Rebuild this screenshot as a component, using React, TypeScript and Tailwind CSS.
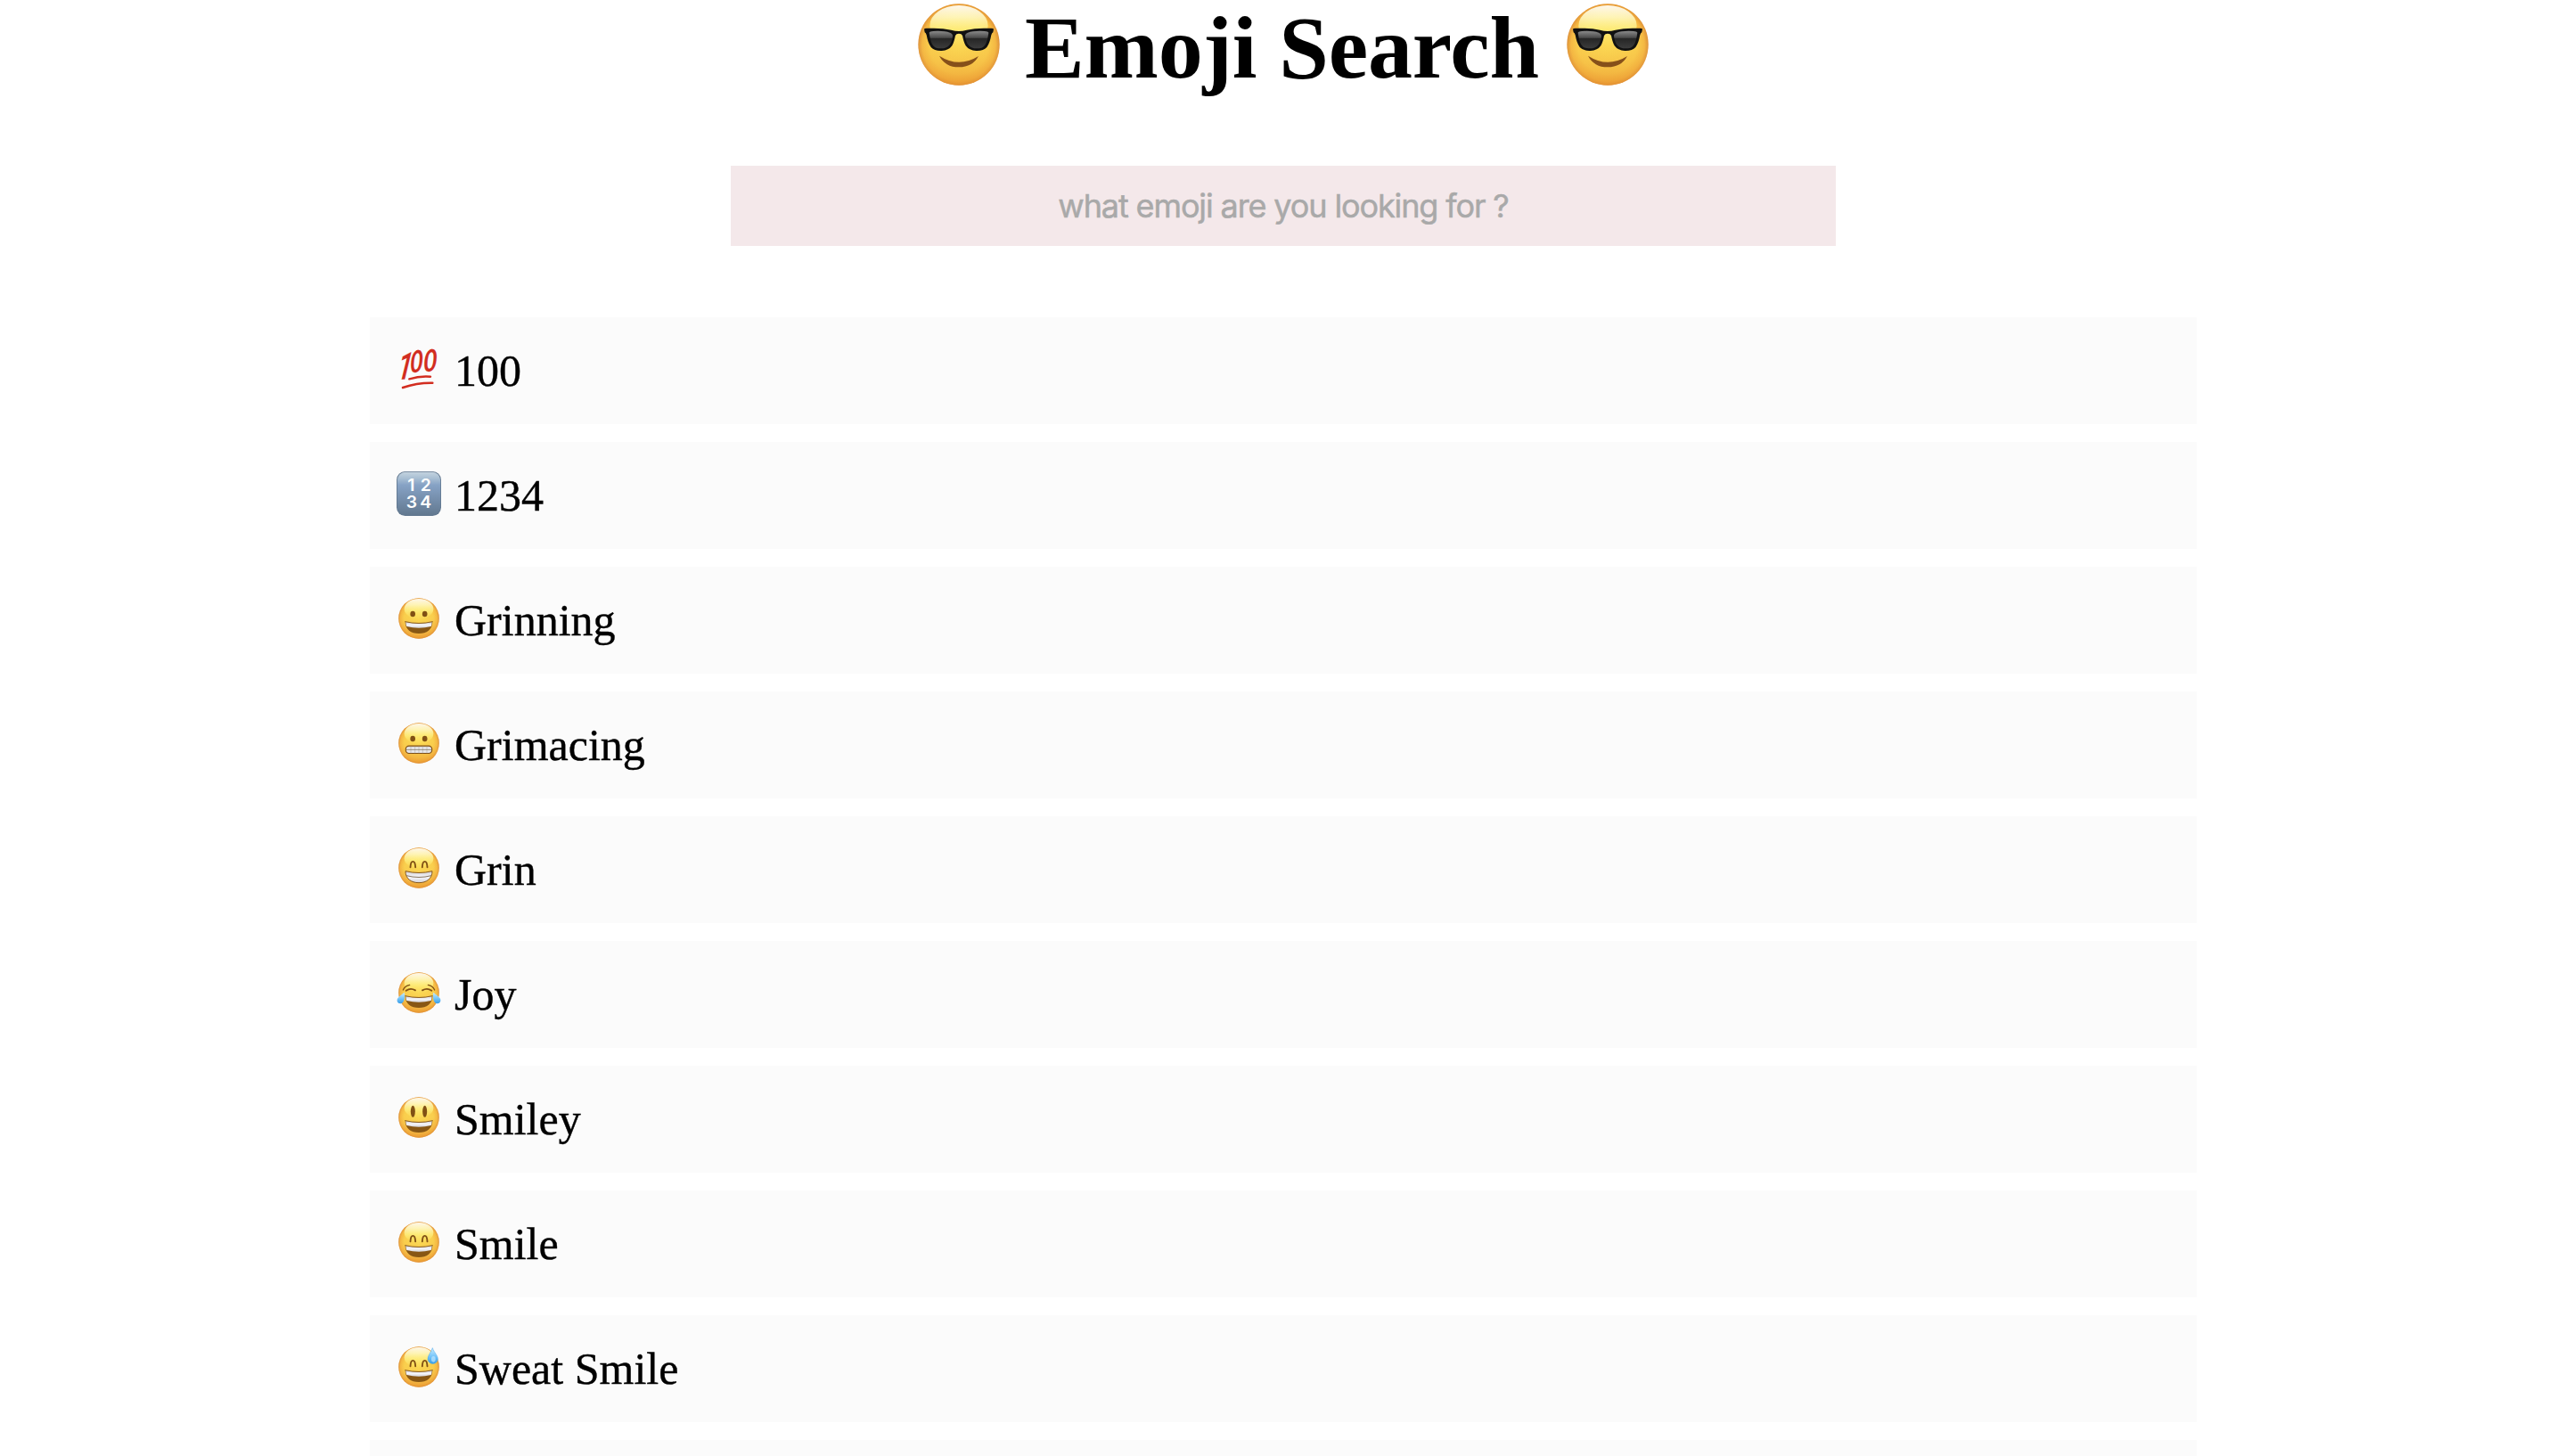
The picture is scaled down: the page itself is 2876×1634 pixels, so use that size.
import React from "react";

type Kind =
  | "sunglasses"
  | "hundred"
  | "numbers"
  | "grinning"
  | "grimacing"
  | "grin"
  | "joy"
  | "smiley"
  | "smile"
  | "sweat";

const BROWN = "#805014";

function Defs() {
  return (
    <svg width="0" height="0" className="absolute" aria-hidden="true">
      <defs>
        <radialGradient id="skin" cx="0.5" cy="0.5" r="0.5">
          <stop offset="0" stopColor="#fbdc55" />
          <stop offset="0.72" stopColor="#f9cf4d" />
          <stop offset="0.9" stopColor="#f3b642" />
          <stop offset="1" stopColor="#d98a38" />
        </radialGradient>
        <linearGradient id="shade" x1="0" y1="0" x2="0" y2="1">
          <stop offset="0" stopColor="#ffb52e" stopOpacity="0.35" />
          <stop offset="0.45" stopColor="#fbc84e" stopOpacity="0.1" />
          <stop offset="1" stopColor="#e9952f" stopOpacity="0.7" />
        </linearGradient>
        <linearGradient id="gloss" x1="0" y1="0" x2="0" y2="1">
          <stop offset="0" stopColor="#ffffff" stopOpacity="0.9" />
          <stop offset="0.3" stopColor="#fffed0" stopOpacity="0.8" />
          <stop offset="0.6" stopColor="#fffb90" stopOpacity="0.6" />
          <stop offset="1" stopColor="#fff07a" stopOpacity="0" />
        </linearGradient>
        <linearGradient id="teeth" x1="0" y1="0" x2="0" y2="1">
          <stop offset="0" stopColor="#cfcfd4" />
          <stop offset="0.5" stopColor="#f6f6fa" />
          <stop offset="1" stopColor="#d4d4da" />
        </linearGradient>
        <linearGradient id="lens" x1="0" y1="0" x2="0" y2="1">
          <stop offset="0" stopColor="#8a8a8a" />
          <stop offset="0.38" stopColor="#4a4a4a" />
          <stop offset="0.44" stopColor="#262626" />
          <stop offset="1" stopColor="#3c3c3c" />
        </linearGradient>
        <linearGradient id="keycap" x1="0" y1="0" x2="0" y2="1">
          <stop offset="0" stopColor="#c3d3df" />
          <stop offset="0.14" stopColor="#a9bfd3" />
          <stop offset="0.3" stopColor="#86a2c5" />
          <stop offset="1" stopColor="#62788f" />
        </linearGradient>
        <linearGradient id="water" x1="0" y1="0" x2="0" y2="1">
          <stop offset="0" stopColor="#c9ecff" />
          <stop offset="0.5" stopColor="#7cc8fa" />
          <stop offset="1" stopColor="#369de8" />
        </linearGradient>
      </defs>
    </svg>
  );
}

function Face() {
  return (
    <>
      <circle cx="75" cy="75" r="68.5" fill="url(#skin)" />
      <circle cx="75" cy="75" r="68.5" fill="url(#shade)" />
      <ellipse cx="75" cy="43" rx="49" ry="34" fill="url(#gloss)" />
    </>
  );
}

function OpenMouth() {
  return (
    <>
      <path d="M29 86Q75 97 121 86C121 112 101 126 75 126S29 112 29 86Z" fill="#885714" />
      <path d="M31 87Q75 98 119 87Q119 96 116 102Q75 112 34 102Q31 96 31 87Z" fill="url(#teeth)" />
      <path d="M29 86Q75 97 121 86" fill="none" stroke={BROWN} strokeWidth="2.5" strokeLinecap="round" />
    </>
  );
}

function ArchEyes() {
  return (
    <g fill="none" stroke={BROWN} strokeWidth="5.6" strokeLinecap="round">
      <path d="M46.500 73C47 59 50 53.500 55 53.500S63 59 63.500 73" />
      <path d="M86.500 73C87 59 90 53.500 95 53.500S103 59 103.500 73" />
    </g>
  );
}

function Artwork({ kind }: { kind: Kind }) {
  switch (kind) {
    case "sunglasses":
      return (
        <>
          <Face />
          <path d="M42 94Q75 115 108 94.500Q98 113 75 113T42 94Z" fill="#86501a" />
          <path
            d="M16.500 49Q17 47.500 22 47.800Q45 46.500 62 50.500Q75 54.500 88 50.500Q105 46.500 128 47.800Q133 47.500 133.500 49L132.500 54.500Q130.500 55.500 129.500 59Q127 73 122 79.500Q116 86 104 85.500Q92 85 86.500 77Q83 71 81 60Q79.500 56.500 75 56.500T69 60Q67 71 63.500 77Q58 85 46 85.500Q34 86 28 79.500Q23 73 20.500 59Q19.500 55.500 17.500 54.500Z"
            fill="#111"
          />
          <path d="M25 55Q26 53 32 52.500Q50 51.500 60 55Q65 57 64.500 61C62.500 75 57 81.500 45 81.500C32 81.500 28 76 25 55Z" fill="url(#lens)" />
          <path d="M125 55Q124 53 118 52.500Q100 51.500 90 55Q85 57 85.500 61C87.500 75 93 81.500 105 81.500C118 81.500 122 76 125 55Z" fill="url(#lens)" />
        </>
      );
    case "hundred":
      return (
        <g fill="#d22d20" stroke="#d22d20">
          <g fontFamily="Lato, sans-serif" fontStyle="italic" fontWeight="700" strokeWidth="0.500">
            <text transform="matrix(0.72 -0.05 -0.12 1 -1 112)" fontSize="126" fontFamily="Roboto, sans-serif" fontWeight="500">1</text>
            <text transform="matrix(0.74 -0.05 -0.04 1 44 88)" fontSize="102">0</text>
            <text transform="matrix(0.78 -0.05 -0.04 1 89 85)" fontSize="102">0</text>
          </g>
          <g fill="none" strokeLinecap="round" strokeWidth="7.500">
            <path d="M43 109Q78 98 114 101" />
            <path d="M21 138Q70 121 121 122" />
          </g>
        </g>
      );
    case "numbers":
      return (
        <>
          <rect width="150" height="150" rx="29" fill="#61778f" />
          <rect x="2.500" y="2.500" width="145" height="145" rx="27" fill="url(#keycap)" />
          <g fill="#fff" fontFamily="Inter, sans-serif" fontSize="58" fontWeight="600" textAnchor="middle">
            <text x="49" y="67">1</text>
            <text x="98" y="67">2</text>
            <text x="51" y="123">3</text>
            <text x="98" y="123">4</text>
          </g>
        </>
      );
    case "grinning":
      return (
        <>
          <Face />
          <ellipse cx="54.500" cy="60" rx="8.500" ry="10" fill={BROWN} />
          <ellipse cx="95" cy="60" rx="8.500" ry="10" fill={BROWN} />
          <OpenMouth />
        </>
      );
    case "smiley":
      return (
        <>
          <Face />
          <ellipse cx="55" cy="55" rx="7.500" ry="19.500" fill={BROWN} />
          <ellipse cx="95" cy="55" rx="7.500" ry="19.500" fill={BROWN} />
          <OpenMouth />
        </>
      );
    case "grimacing":
      return (
        <>
          <Face />
          <ellipse cx="54.500" cy="60" rx="8.500" ry="10" fill={BROWN} />
          <ellipse cx="95" cy="60" rx="8.500" ry="10" fill={BROWN} />
          <rect x="31" y="84.500" width="88" height="25" rx="11" fill="url(#teeth)" stroke={BROWN} strokeWidth="3.500" />
          <path d="M48 86V109M62 86V109M75 86V109M88 86V109M102 86V109" stroke="#a9a59c" strokeWidth="1.500" />
          <path d="M32 97H118" stroke="#77705f" strokeWidth="2.500" />
        </>
      );
    case "grin":
      return (
        <>
          <Face />
          <ArchEyes />
          <path d="M30 86Q75 97 120 86C120 111 101 125 75 125S30 111 30 86Z" fill="url(#teeth)" stroke={BROWN} strokeWidth="2.800" />
          <path d="M33 101Q75 112 117 101" fill="none" stroke="#86765f" strokeWidth="3" />
        </>
      );
    case "smile":
      return (
        <>
          <Face />
          <ArchEyes />
          <OpenMouth />
        </>
      );
    case "joy":
      return (
        <>
          <Face />
          <g fill="none" stroke={BROWN} strokeLinecap="round">
            <path d="M22 66Q28 52 44 49" strokeWidth="4" />
            <path d="M128 66Q122 52 106 49" strokeWidth="4" />
            <path d="M32 68Q47 58 63 67" strokeWidth="5.500" />
            <path d="M87 67Q103 58 118 68" strokeWidth="5.500" />
          </g>
          <OpenMouth />
          <path d="M26 74C30 88 26 111 13 112C3 112 -1 102 4 94C9 86 18 82 26 74Z" fill="url(#water)" />
          <path d="M124 74C120 88 124 111 137 112C147 112 151 102 146 94C141 86 132 82 124 74Z" fill="url(#water)" />
        </>
      );
    case "sweat":
      return (
        <>
          <Face />
          <ArchEyes />
          <OpenMouth />
          <path d="M121 11C125 25 139 36 139 49A17 16 0 0 1 105 48C105 36 117 25 121 11Z" fill="url(#water)" stroke="#49a5e6" strokeWidth="1.500" />
          <ellipse cx="124" cy="49" rx="7" ry="10" fill="#c4eaff" opacity="0.65" />
        </>
      );
  }
}

function Emoji({ kind, className }: { kind: Kind; className: string }) {
  return (
    <svg viewBox="0 0 150 150" className={className} overflow="visible" aria-hidden="true">
      <Artwork kind={kind} />
    </svg>
  );
}

const RESULTS: { kind: Kind; title: string }[] = [
  { kind: "hundred", title: "100" },
  { kind: "numbers", title: "1234" },
  { kind: "grinning", title: "Grinning" },
  { kind: "grimacing", title: "Grimacing" },
  { kind: "grin", title: "Grin" },
  { kind: "joy", title: "Joy" },
  { kind: "smiley", title: "Smiley" },
  { kind: "smile", title: "Smile" },
  { kind: "sweat", title: "Sweat Smile" },
];

export default function App() {
  return (
    <div className="h-[1634px] w-[2880px] overflow-hidden bg-white font-['Liberation_Serif',serif] text-black">
      <Defs />
      <header className="flex h-[186px] justify-center">
        <Emoji kind="sunglasses" className="size-[100px] shrink-0" />
        <h1 className="mr-6 ml-6 h-[112px] w-[580px] text-[100px] leading-[108px] font-bold tracking-[-0.15px] whitespace-nowrap">Emoji Search</h1>
        <Emoji kind="sunglasses" className="size-[100px] shrink-0" />
      </header>
      <input
        type="text"
        placeholder="what emoji are you looking for ?"
        className="mx-auto block h-[90px] w-[1240px] bg-[#f4e8ea] text-center font-['Inter',sans-serif] text-[36px] tracking-[-1.12px] outline-none [-webkit-text-stroke:0.5px_#a9a9a9] placeholder:text-[#a9a9a9]"
      />
      <ul className="mx-auto mt-20 flex w-[2050px] flex-col gap-5">
        {RESULTS.map(({ kind, title }) => (
          <li key={title} className="flex h-[120px] items-start bg-[#fbfbfb] pt-[33px] pl-[30px]">
            <Emoji kind={kind} className="size-[50px] shrink-0" />
            <span className="ml-[15px] text-[50px] leading-[54px] [-webkit-text-stroke:0.4px_#000]">{title}</span>
          </li>
        ))}
        <li className="h-[120px] bg-[#fbfbfb]" />
      </ul>
    </div>
  );
}
